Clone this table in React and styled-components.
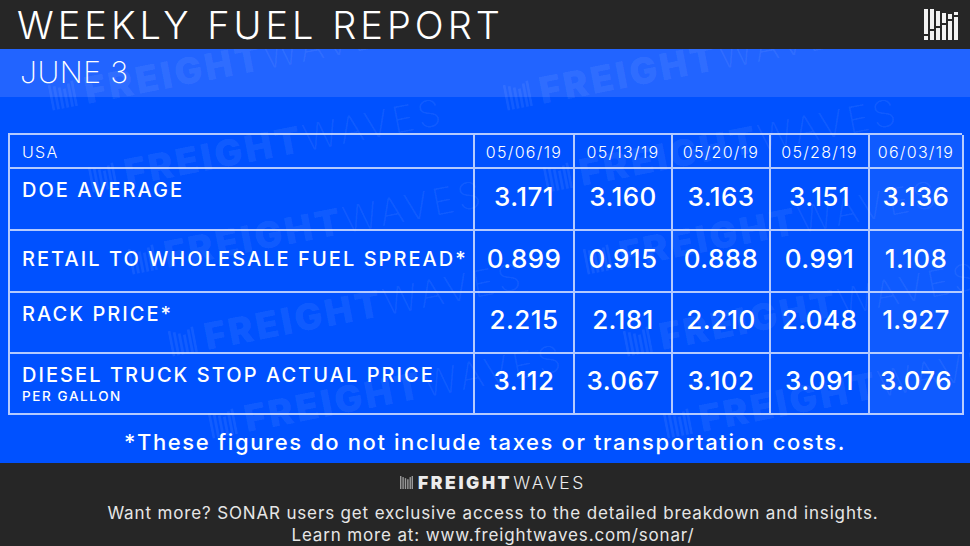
import React from "react";
import styled, { createGlobalStyle } from "styled-components";

const GlobalStyle = createGlobalStyle`
    body {
        margin: 0;
        background: #262626;
        font-family: Inter, "Open Sans", sans-serif;
    }
`

const Page = styled.div`
    width: 970px;
    height: 546px;
    display: flex;
    flex-direction: column;
    overflow: hidden;
    color: #fff;
`

const Header = styled.header`
    height: 49px;
    background: #262626;
    display: flex;
    align-items: center;
    justify-content: space-between;
    padding: 0 10px 0 17px;
    box-sizing: border-box;
`

const Title = styled.h1`
    margin: 0;
    font-family: Inter, sans-serif;
    font-weight: 300;
    font-size: 38px;
    letter-spacing: 4px;
    line-height: 1;
    padding-top: 1px;
`

const Main = styled.main`
    flex: 1;
    position: relative;
    overflow: hidden;
    background: #0051ff;
`

const Band = styled.div`
    height: 48px;
    background: #2264ff;
    padding-left: 20px;
    display: flex;
    align-items: center;
`

const DateLabel = styled.h2`
    margin: 0;
    font-family: Inter, sans-serif;
    font-weight: 200;
    font-size: 30px;
    letter-spacing: 0.5px;
    line-height: 1;
    margin-top: -2px;
`

const TableWrap = styled.div`
    padding: 36px 8px 0 8px;
`

const Grid = styled.div`
    display: grid;
    grid-template-columns: 465px 100px 98px 98px 99px 94px;
    grid-template-rows: 34px 62px 62px 61px 61px;
    border-top: 2px solid rgba(225, 232, 255, 0.8);
    border-left: 2px solid rgba(225, 232, 255, 0.8);
    position: relative;
    z-index: 1;
`

const Cell = styled.div`
    box-sizing: border-box;
    border-right: 2px solid rgba(225, 232, 255, 0.8);
    border-bottom: 2px solid rgba(225, 232, 255, 0.8);
    background: ${p => (p.$last ? "rgba(255, 255, 255, 0.06)" : "transparent")};
    display: flex;
    flex-direction: column;
`

const HeadCell = styled(Cell)`
    justify-content: center;
    align-items: ${p => (p.$label ? "flex-start" : "center")};
    padding-left: ${p => (p.$label ? "12px" : "0")};
    font-size: 16px;
    font-weight: 300;
    letter-spacing: 1.3px;
    padding-top: 2px;
`

const LabelCell = styled(Cell)`
    justify-content: ${p => (p.$centered ? "center" : "flex-start")};
    padding: ${p => (p.$centered ? "0 0 4px 12px" : "10px 0 0 12px")};
`

const Label = styled.div`
    font-size: 20px;
    font-weight: 500;
    letter-spacing: 2.05px;
    line-height: 22px;
`

const SubLabel = styled.div`
    margin-top: 3px;
    font-size: 13.5px;
    font-weight: 500;
    letter-spacing: 1.6px;
    line-height: 15px;
`

const ValueCell = styled(Cell)`
    justify-content: center;
    align-items: center;
    padding-bottom: 6px;
    font-size: 26px;
    font-weight: 500;
    letter-spacing: 0.4px;
`

const Footnote = styled.p`
    margin: 14px 0 0;
    text-align: center;
    font-size: 22px;
    font-weight: 500;
    letter-spacing: 1.6px;
    position: relative;
    z-index: 1;
`

const Watermarks = styled.div`
    position: absolute;
    inset: 0;
    pointer-events: none;
`

const Mark = styled.div`
    position: absolute;
    display: flex;
    align-items: center;
    gap: 9px;
    transform: rotate(-11deg);
    transform-origin: left center;
    color: rgba(255, 255, 255, 0.07);
    white-space: nowrap;
    font-size: 37px;
    line-height: 1;
`

const Heavy = styled.span`
    font-weight: 900;
    letter-spacing: 3px;
`

const Thin = styled.span`
    font-weight: 200;
    letter-spacing: 4px;
`

const Footer = styled.footer`
    height: 83px;
    background: #262626;
    display: flex;
    flex-direction: column;
    align-items: center;
    padding: 11px 0 0 16px;
    box-sizing: border-box;
`

const Brand = styled.div`
    display: flex;
    align-items: center;
    gap: 5px;
    color: #ececec;
    font-size: 17.5px;
    line-height: 1;
    margin-bottom: 10px;
`

const BrandHeavy = styled.span`
    font-weight: 900;
    letter-spacing: 2.6px;
`

const BrandThin = styled.span`
    font-weight: 300;
    letter-spacing: 2.6px;
    margin-left: -4px;
`

const Promo = styled.p`
    margin: 0;
    text-align: center;
    color: #e6e6e6;
    font-size: 17px;
    font-weight: 400;
    letter-spacing: 0.85px;
    line-height: 22px;
`

const dates = ["05/06/19", "05/13/19", "05/20/19", "05/28/19", "06/03/19"];

const rows = [
    { label: "DOE AVERAGE", values: ["3.171", "3.160", "3.163", "3.151", "3.136"] },
    { label: "RETAIL TO WHOLESALE FUEL SPREAD*", centered: true, values: ["0.899", "0.915", "0.888", "0.991", "1.108"] },
    { label: "RACK PRICE*", values: ["2.215", "2.181", "2.210", "2.048", "1.927"] },
    { label: "DIESEL TRUCK STOP ACTUAL PRICE", sub: "PER GALLON", values: ["3.112", "3.067", "3.102", "3.091", "3.076"] },
];

// watermark anchor points, in main-area coordinates
const marks = [];
for (let k = 0; k < 5; k++) {
    for (let j = 0; j < 2; j++) {
        marks.push({ x: 50 + 40 * k + 455 * j, y: 30 + 82 * k });
    }
}

const CornerLogo = () => (
    <svg width="36" height="32" viewBox="0 0 36 32">
        <g fill="#f2f2f2">
            <rect x="0" y="0" width="4" height="25" />
            <rect x="0" y="27" width="4" height="4" />
            <rect x="6" y="0" width="4" height="20" />
            <rect x="6" y="22" width="4" height="9" />
            <rect x="12" y="2" width="4" height="15" />
            <rect x="12" y="19" width="4" height="12" />
            <rect x="18" y="4" width="4" height="10" />
            <rect x="18" y="16" width="4" height="15" />
            <rect x="24" y="5" width="4" height="5" />
            <rect x="24" y="12" width="4" height="19" />
            <rect x="30" y="3" width="4" height="3" />
            <rect x="30" y="8" width="4" height="23" />
        </g>
    </svg>
);

const BarsIcon = ({ size, color }) => (
    <svg width={size} height={size} viewBox="0 0 12 12">
        <g fill={color}>
            <rect x="0" y="0" width="1.3" height="12" />
            <rect x="2.2" y="1" width="1.3" height="11" />
            <rect x="4.4" y="2" width="1.3" height="10" />
            <rect x="6.6" y="3" width="1.3" height="9" />
            <rect x="8.8" y="1" width="1.3" height="11" />
            <rect x="10.7" y="0" width="1.3" height="12" />
        </g>
    </svg>
);

class App extends React.Component {
    render() {
        return (
            <Page>
                <GlobalStyle />
                <Header>
                    <Title>WEEKLY FUEL REPORT</Title>
                    <CornerLogo />
                </Header>
                <Main>
                    <Band>
                        <DateLabel>JUNE 3</DateLabel>
                    </Band>
                    <TableWrap>
                        <Grid>
                            <HeadCell $label>USA</HeadCell>
                            {dates.map((d, i) => (
                                <HeadCell key={d} $last={i === 4}>{d}</HeadCell>
                            ))}
                            {rows.map(row => (
                                <React.Fragment key={row.label}>
                                    <LabelCell $centered={row.centered}>
                                        <Label>{row.label}</Label>
                                        {row.sub && <SubLabel>{row.sub}</SubLabel>}
                                    </LabelCell>
                                    {row.values.map((v, i) => (
                                        <ValueCell key={i} $last={i === 4}>{v}</ValueCell>
                                    ))}
                                </React.Fragment>
                            ))}
                        </Grid>
                    </TableWrap>
                    <Footnote>*These figures do not include taxes or transportation costs.</Footnote>
                    <Watermarks>
                        {marks.map((m, i) => (
                            <Mark key={i} style={{ left: m.x, top: m.y }}>
                                <BarsIcon size={26} color="rgba(255,255,255,0.07)" />
                                <span><Heavy>FREIGHT</Heavy><Thin>WAVES</Thin></span>
                            </Mark>
                        ))}
                    </Watermarks>
                </Main>
                <Footer>
                    <Brand>
                        <BarsIcon size={13} color="#9a9a9a" />
                        <BrandHeavy>FREIGHT</BrandHeavy>
                        <BrandThin>WAVES</BrandThin>
                    </Brand>
                    <Promo>
                        Want more? SONAR users get exclusive access to the detailed breakdown and insights.
                        <br />
                        Learn more at: www.freightwaves.com/sonar/
                    </Promo>
                </Footer>
            </Page>
        );
    }
}

export default App;
